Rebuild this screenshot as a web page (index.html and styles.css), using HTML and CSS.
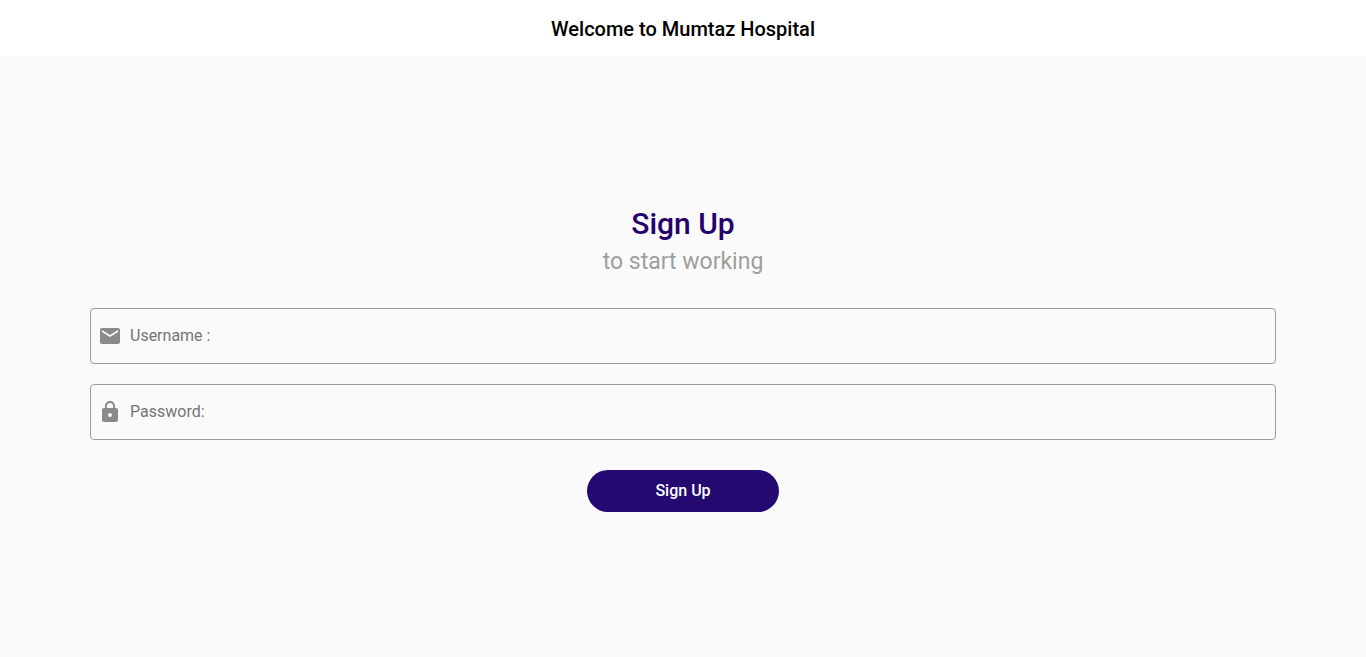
FILE: index.html
```html
<!DOCTYPE html>
<html lang="en">
<head>
<meta charset="utf-8">
<meta name="viewport" content="width=device-width, initial-scale=1">
<title>Mumtaz Hospital</title>
<link rel="stylesheet" href="styles.css">
</head>
<body>
<header class="app-bar"><h1 class="app-title">Welcome to Mumtaz Hospital</h1></header>
<main class="content">
  <form class="signup">
    <h2 class="title">Sign Up</h2>
    <p class="subtitle">to start working</p>
    <div class="field">
      <label class="field-icon" for="username" aria-label="Username">
        <svg viewBox="0 0 24 24" aria-hidden="true"><path d="M20 4H4c-1.100 0-1.990.9-1.990 2L2 18c0 1.100.9 2 2 2h16c1.100 0 2-.9 2-2V6c0-1.100-.9-2-2-2zm0 4l-8 5-8-5V6l8 5 8-5v2z"/></svg>
      </label>
      <input class="field-input" id="username" type="text" placeholder="Username :">
    </div>
    <div class="field">
      <label class="field-icon" for="password" aria-label="Password">
        <svg viewBox="0 0 24 24" aria-hidden="true"><path d="M18 8h-1V6c0-2.760-2.240-5-5-5S7 3.240 7 6v2H6c-1.100 0-2 .9-2 2v10c0 1.100.9 2 2 2h12c1.100 0 2-.9 2-2V10c0-1.100-.9-2-2-2zm-6 9c-1.100 0-2-.9-2-2s.9-2 2-2 2 .9 2 2-.9 2-2 2zm3.100-9H8.900V6c0-1.710 1.390-3.100 3.100-3.100s3.100 1.390 3.100 3.100v2z"/></svg>
      </label>
      <input class="field-input" id="password" type="password" placeholder="Password:">
    </div>
    <button class="submit" type="button">Sign Up</button>
  </form>
</main>
</body>
</html>
```
FILE: styles.css
```css
* { box-sizing: border-box; }
body {
  margin: 0;
  min-height: 100vh;
  display: flex;
  flex-direction: column;
  background: #fafafa;
  font-family: Roboto, sans-serif;
}
.app-bar {
  height: 56px;
  display: flex;
  align-items: center;
  justify-content: center;
  background: #fff;
}
.app-title {
  margin: 0;
  padding-top: 2px;
  font-size: 20px;
  line-height: 24px;
  font-weight: 500;
  color: #000;
}
.content {
  flex: 1;
  display: flex;
  align-items: center;
  padding: 4px 90px 0;
}
.signup {
  flex: 1;
  display: flex;
  flex-direction: column;
  align-items: center;
}
.title {
  margin: 0;
  font-size: 30px;
  line-height: 36px;
  font-weight: 500;
  color: #26006d;
}
.subtitle {
  margin: 6px 0 32px;
  font-size: 23px;
  line-height: 28px;
  color: #9e9e9e;
}
.field {
  width: 100%;
  height: 56px;
  margin-bottom: 20px;
  padding: 0 7px;
  display: flex;
  align-items: center;
  gap: 8px;
  border: 1px solid #9c9c9c;
  border-radius: 4px;
}
.field-icon { display: flex; }
.field-icon svg {
  width: 24px;
  height: 24px;
  fill: #8a8a8a;
}
.field-input {
  flex: 1;
  min-width: 0;
  height: 100%;
  padding: 0;
  border: 0;
  outline: 0;
  background: transparent;
  font: 400 16px Roboto, sans-serif;
  color: #212121;
}
.field-input::placeholder { color: #757575; opacity: 1; }
.submit {
  width: 192px;
  height: 42px;
  margin-top: 10px;
  border: 0;
  border-radius: 21px;
  background: #240970;
  color: #fff;
  font: 500 16px Roboto, sans-serif;
  cursor: pointer;
}
```
